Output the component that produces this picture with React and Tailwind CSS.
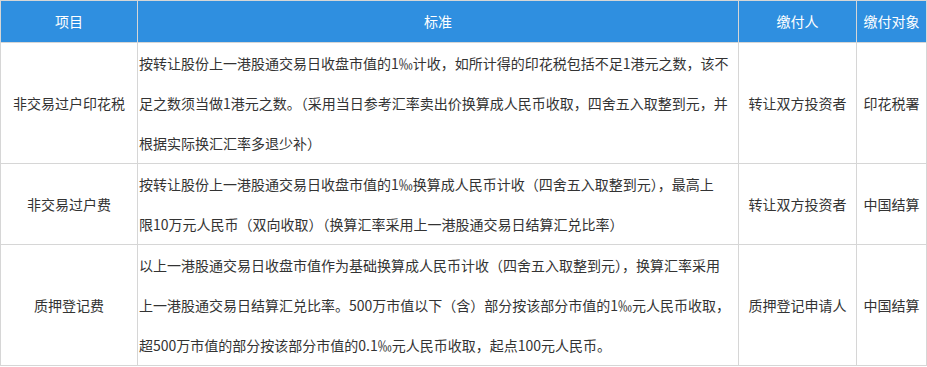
export default function App() {
  const font = { fontFamily: '"Noto Sans CJK SC", "Noto Sans", sans-serif' };
  const rows = [
    {
      item: "非交易过户印花税",
      lines: [
        "按转让股份上一港股通交易日收盘市值的1‰计收，如所计得的印花税包括不足1港元之数，该不",
        "足之数须当做1港元之数。（采用当日参考汇率卖出价换算成人民币收取，四舍五入取整到元，并",
        "根据实际换汇汇率多退少补）",
      ],
      payer: "转让双方投资者",
      target: "印花税署",
    },
    {
      item: "非交易过户费",
      lines: [
        "按转让股份上一港股通交易日收盘市值的1‰换算成人民币计收（四舍五入取整到元），最高上",
        "限10万元人民币（双向收取）（换算汇率采用上一港股通交易日结算汇兑比率）",
      ],
      payer: "转让双方投资者",
      target: "中国结算",
    },
    {
      item: "质押登记费",
      lines: [
        "以上一港股通交易日收盘市值作为基础换算成人民币计收（四舍五入取整到元），换算汇率采用",
        "上一港股通交易日结算汇兑比率。500万市值以下（含）部分按该部分市值的1‰元人民币收取，",
        "超500万市值的部分按该部分市值的0.1‰元人民币收取，起点100元人民币。",
      ],
      payer: "质押登记申请人",
      target: "中国结算",
    },
  ];
  return (
    <div className="w-[927px] h-[367px] bg-white" style={font}>
      <table className="border-collapse w-[926px] table-fixed text-[14px] text-[#333]">
        <colgroup>
          <col className="w-[137px]" />
          <col className="w-[601px]" />
          <col className="w-[118px]" />
          <col className="w-[70px]" />
        </colgroup>
        <thead>
          <tr className="bg-[#2f8fe0] text-white h-[42px]">
            <th className="border border-[#d6d6d6] font-normal">项目</th>
            <th className="border border-[#d6d6d6] font-normal">标准</th>
            <th className="border border-[#d6d6d6] font-normal">缴付人</th>
            <th className="border border-[#d6d6d6] font-normal whitespace-nowrap">缴付对象</th>
          </tr>
        </thead>
        <tbody>
          {rows.map((r) => (
            <tr key={r.item}>
              <td className="border border-[#d6d6d6] text-center align-middle">{r.item}</td>
              <td className="border border-[#d6d6d6] pl-[1px] py-0 align-middle">
                {r.lines.map((l, i) => (
                  <div key={i} className="leading-[40px] whitespace-nowrap">{l}</div>
                ))}
              </td>
              <td className="border border-[#d6d6d6] text-center align-middle whitespace-nowrap">{r.payer}</td>
              <td className="border border-[#d6d6d6] text-center align-middle whitespace-nowrap">{r.target}</td>
            </tr>
          ))}
        </tbody>
      </table>
    </div>
  );
}
